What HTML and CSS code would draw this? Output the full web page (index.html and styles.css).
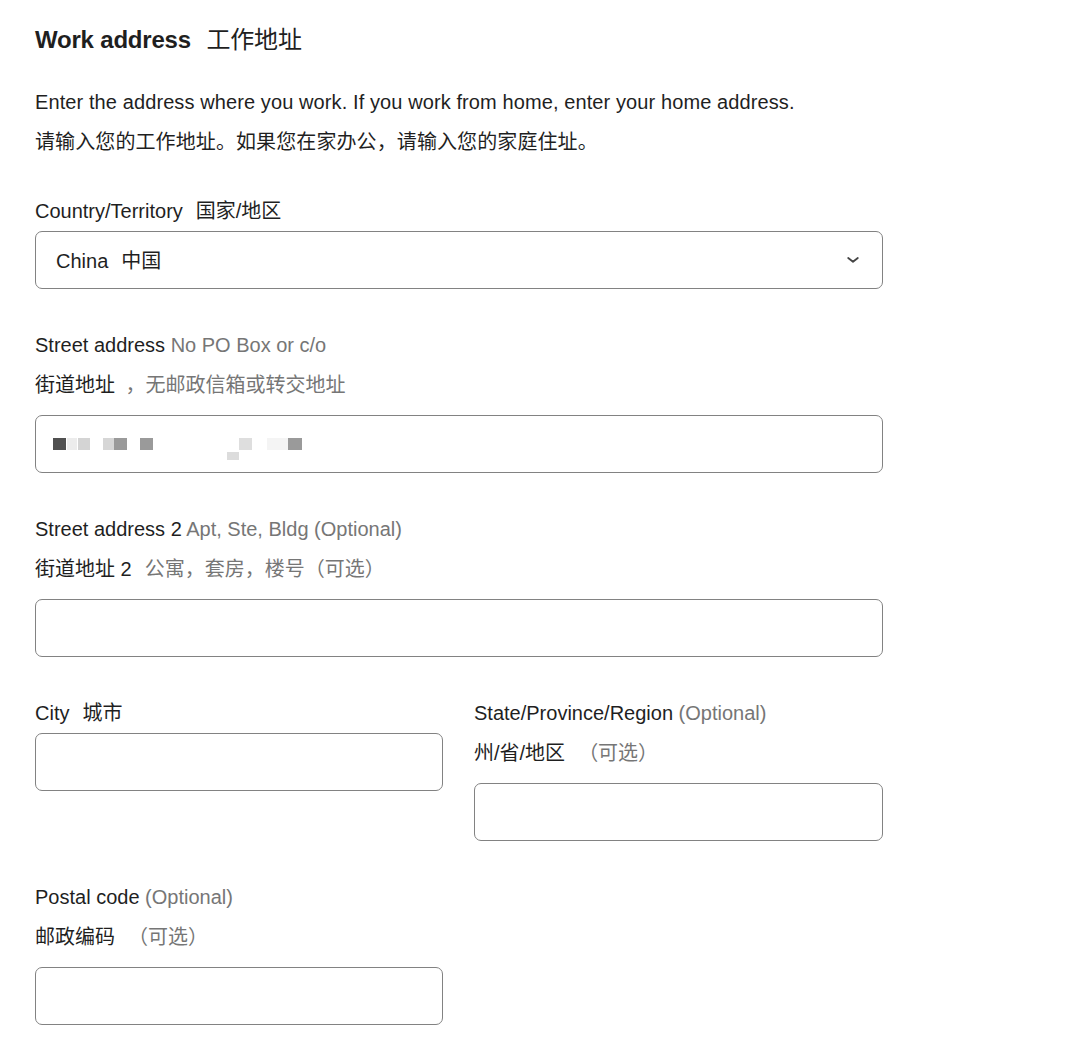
FILE: index.html
```html
<!DOCTYPE html>
<html lang="en">
<head>
<meta charset="utf-8">
<title>Work address</title>
<link rel="stylesheet" href="styles.css">
</head>
<body>
<main class="form">
  <h1 class="title">Work address<span class="zh">工作地址</span></h1>
  <p class="intro">Enter the address where you work. If you work from home, enter your home address.<br>请输入您的工作地址。如果您在家办公，请输入您的家庭住址。</p>

  <div class="fields">
    <div class="field">
      <div class="label">Country/Territory<span class="zh">国家/地区</span></div>
      <div class="box select">
        <span class="value">China<span class="zh">中国</span></span>
        <svg class="chevron" width="12" height="6" viewBox="0 0 12 6" aria-hidden="true"><path d="M1.2 1 L6 4.8 L10.8 1" fill="none" stroke="#444" stroke-width="1.8" stroke-linecap="round" stroke-linejoin="round"/></svg>
      </div>
    </div>

    <div class="field">
      <div class="label">Street address <span class="hint">No PO Box or c/o</span></div>
      <div class="label sub">街道地址 <span class="hint comma">，无邮政信箱或转交地址</span></div>
      <div class="box input filled">
        <svg class="masked" width="250" height="22" viewBox="0 0 250 22" aria-hidden="true">
          <rect x="0" y="0" width="13" height="12" fill="#505050"/>
          <rect x="14" y="0" width="10" height="12" fill="#ececec"/>
          <rect x="25" y="0" width="12" height="12" fill="#d4d4d4"/>
          <rect x="50" y="0" width="11" height="12" fill="#d6d6d6"/>
          <rect x="61" y="0" width="13" height="12" fill="#9a9a9a"/>
          <rect x="87" y="0" width="13" height="12" fill="#9a9a9a"/>
          <rect x="174" y="14" width="12" height="8" fill="#dcdcdc"/>
          <rect x="186" y="0" width="13" height="12" fill="#dedede"/>
          <rect x="214" y="0" width="21" height="12" fill="#f4f4f4"/>
          <rect x="235" y="0" width="14" height="12" fill="#9a9a9a"/>
        </svg>
      </div>
    </div>

    <div class="field">
      <div class="label">Street address 2 <span class="hint">Apt, Ste, Bldg (Optional)</span></div>
      <div class="label sub">街道地址 2<span class="hint zh">公寓，套房，楼号（可选）</span></div>
      <div class="box input"></div>
    </div>

    <div class="row">
      <div class="field">
        <div class="label">City<span class="zh">城市</span></div>
        <div class="box input"></div>
      </div>
      <div class="field">
        <div class="label">State/Province/Region <span class="hint">(Optional)</span></div>
        <div class="label sub">州/省/地区<span class="hint zh">（可选）</span></div>
        <div class="box input"></div>
      </div>
    </div>

    <div class="row">
      <div class="field">
        <div class="label">Postal code <span class="hint">(Optional)</span></div>
        <div class="label sub">邮政编码<span class="hint zh">（可选）</span></div>
        <div class="box input"></div>
      </div>
    </div>
  </div>
</main>
</body>
</html>
```

FILE: styles.css
```css
html, body {
  margin: 0;
  background: #ffffff;
}

body {
  font-family: "Liberation Sans", "Noto Sans CJK SC", sans-serif;
  color: #1f1f1f;
}

.form {
  width: 848px;
  padding: 24px 0 40px 35px;
}

.zh {
  margin-left: 0.65em;
  font-weight: normal;
}

.title {
  margin: 0;
  font-size: 24px;
  line-height: 32px;
  font-weight: bold;
  letter-spacing: -0.2px;
}

.intro {
  margin: 26px 0 35px;
  font-size: 20px;
  line-height: 40px;
  letter-spacing: 0.1px;
}

.fields {
  display: flex;
  flex-direction: column;
  gap: 42px;
}

.field {
  display: flex;
  flex-direction: column;
}

.row {
  display: grid;
  grid-template-columns: 408px 409px;
  column-gap: 31px;
  align-items: start;
}

.label {
  font-size: 20px;
  line-height: 28px;
  margin-bottom: 6px;
  white-space: nowrap;
}

.label.sub {
  margin-top: 6px;
  margin-bottom: 16px;
}

.hint {
  color: #767676;
}

.hint.comma {
  margin-left: 5px;
}

.box {
  box-sizing: border-box;
  height: 58px;
  border: 1px solid #828282;
  border-radius: 7px;
  background: #ffffff;
}

.select {
  display: flex;
  align-items: center;
  justify-content: space-between;
  padding: 0 23px 1px 20px;
  font-size: 20px;
}

.chevron {
  display: block;
}

.input.filled {
  padding: 22px 0 0 17px;
}

.masked {
  display: block;
}
```
